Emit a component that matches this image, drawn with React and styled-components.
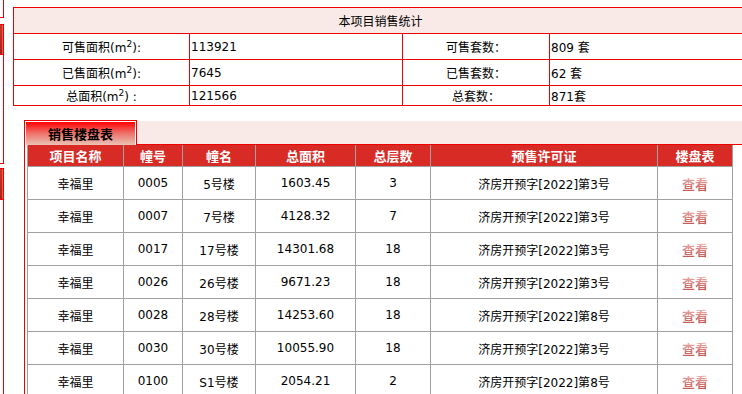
import styled, { createGlobalStyle } from "styled-components"

const GlobalStyle = createGlobalStyle`
  body {
    margin: 0;
    overflow: hidden;
    background: #fff;
    font-family: "DejaVu Sans", "Noto Sans CJK SC", sans-serif;
    font-size: 12px;
    color: #000;
  }
`

const summary = [
  { label: "可售面积", area: "113921", setLabel: "可售套数：", sets: "809 套", h: 26 },
  { label: "已售面积", area: "7645", setLabel: "已售套数：", sets: "62 套", h: 26 },
  { label: "总面积", area: "121566", setLabel: "总套数：", sets: "871套", h: 20, spaced: true },
]

const buildings = [
  ["0005", "5号楼", "1603.45", "3", "3"],
  ["0007", "7号楼", "4128.32", "7", "3"],
  ["0017", "17号楼", "14301.68", "18", "3"],
  ["0026", "26号楼", "9671.23", "18", "3"],
  ["0028", "28号楼", "14253.60", "18", "8"],
  ["0030", "30号楼", "10055.90", "18", "3"],
  ["0100", "S1号楼", "2054.21", "2", "8"],
]

const heads = ["项目名称", "幢号", "幢名", "总面积", "总层数", "预售许可证", "楼盘表"]
const widths = [96, 59, 73, 100, 75, 227, 75]

export default function App() {
  return (
    <Page>
      <GlobalStyle />
      <Sidebar>
        <SidePanel $h={18} />
        <SideGap $h={6} />
        <SideButton $h={31} />
        <SidePanel $h={109} />
        <SideGap $h={4} />
        <SideButton $h={32} />
        <SidePanel $h={200} />
      </Sidebar>
      <Main>
        <Summary>
          <colgroup>
            <col style={{ width: 176 }} />
            <col style={{ width: 213 }} />
            <col style={{ width: 147 }} />
            <col />
          </colgroup>
          <tbody>
            <tr>
              <SummaryTitle colSpan={4}>本项目销售统计</SummaryTitle>
            </tr>
            {summary.map(row => (
              <SummaryRow key={row.label} $h={row.h}>
                <Cell $align="center">
                  {row.label}(m<sup>2</sup>){row.spaced ? " :" : ":"}
                </Cell>
                <Cell>{row.area}</Cell>
                <Cell $align="center">{row.setLabel}</Cell>
                <Cell>{row.sets}</Cell>
              </SummaryRow>
            ))}
          </tbody>
        </Summary>

        <Section>
          <TabBar>
            <Tab>
              <TabFace>销售楼盘表</TabFace>
            </Tab>
            <TabFill />
          </TabBar>
          <Grid>
            <colgroup>
              {widths.map((w, i) => <col key={i} style={{ width: w }} />)}
            </colgroup>
            <thead>
              <tr>
                {heads.map(h => <HeadCell key={h}>{h}</HeadCell>)}
              </tr>
            </thead>
            <tbody>
              {buildings.map(b => (
                <GridRow key={b[0]}>
                  <GridCell>幸福里</GridCell>
                  <GridCell>{b[0]}</GridCell>
                  <GridCell>{b[1]}</GridCell>
                  <GridCell>{b[2]}</GridCell>
                  <GridCell>{b[3]}</GridCell>
                  <GridCell>济房开预字[2022]第{b[4]}号</GridCell>
                  <GridCell><ViewLink>查看</ViewLink></GridCell>
                </GridRow>
              ))}
            </tbody>
          </Grid>
        </Section>
      </Main>
    </Page>
  )
}

const Page = styled.div`
  display: flex;
  width: 742px;
  height: 394px;
  overflow: hidden;
`
const Sidebar = styled.div`
  width: 4px;
  flex: none;
  display: flex;
  flex-direction: column;
  overflow: hidden;
`
const SidePanel = styled.div`
  height: ${p => p.$h}px;
  flex: none;
  box-sizing: border-box;
  border-right: 1px solid #e00;
  border-bottom: 1px solid #e00;
`
const SideGap = styled.div`
  height: ${p => p.$h}px;
  flex: none;
`
const SideButton = styled.div`
  height: ${p => p.$h}px;
  flex: none;
  box-sizing: border-box;
  border: 1px solid #e00;
  border-left: none;
  background: linear-gradient(#c8372c, #a82018);
  box-shadow: inset -1px 0 0 #e06050;
`
const Main = styled.div`
  flex: 1;
  min-width: 0;
  padding: 7px 0 0 9px;
  overflow: hidden;
`
const Summary = styled.table`
  width: 735px;
  table-layout: fixed;
  border-collapse: collapse;
  font-size: 12px;
`
const SummaryTitle = styled.td`
  height: 25px;
  padding: 0;
  text-align: center;
  background: #f9e9e7;
  border: 1px solid #e00;
`
const SummaryRow = styled.tr`
  height: ${p => p.$h}px;
`
const Cell = styled.td`
  padding: 0 1px;
  border: 1px solid #e00;
  text-align: ${p => p.$align || "left"};
  white-space: nowrap;

  sup {
    font-size: 9px;
    vertical-align: 5px;
    line-height: 0;
  }
`
const Section = styled.div`
  margin: 14px 0 0 11px;
  width: 724px;
  border-left: 1px solid #e00;
  padding-left: 2px;
  box-sizing: border-box;
`
const TabBar = styled.div`
  display: flex;
  height: 25px;
  margin-left: -3px;
`
const Tab = styled.div`
  width: 113px;
  flex: none;
  box-sizing: border-box;
  border: 1px solid #e00;
  border-bottom: none;
  padding: 1px 1px 0 1px;
  background: #fff;
`
const TabFace = styled.div`
  height: 100%;
  display: flex;
  align-items: center;
  justify-content: center;
  background: linear-gradient(#ff0000 0%, #f06a64 45%, #e9c4b6 100%);
  font-size: 13px;
  font-weight: bold;
  color: #000;
`
const TabFill = styled.div`
  flex: 1;
  margin-top: 1px;
  background: #f9e9e7;
  border-bottom: 1px solid #e00;
`
const Grid = styled.table`
  width: 705px;
  table-layout: fixed;
  border-collapse: collapse;
  font-size: 12px;
`
const HeadCell = styled.th`
  height: 21px;
  padding: 0;
  background: #d92b26;
  color: #fff;
  font-size: 13px;
  font-weight: bold;
  text-align: center;
  border: 1px solid #a0a0a0;
  border-top: none;
`
const GridRow = styled.tr`
  height: 33px;
`
const GridCell = styled.td`
  padding: 0;
  text-align: center;
  border: 1px solid #a0a0a0;
  white-space: nowrap;
`
const ViewLink = styled.span`
  font-size: 13px;
  font-weight: bold;
  background: linear-gradient(#eeb0ac, #c05450);
  -webkit-background-clip: text;
  background-clip: text;
  color: transparent;
  cursor: pointer;
`
